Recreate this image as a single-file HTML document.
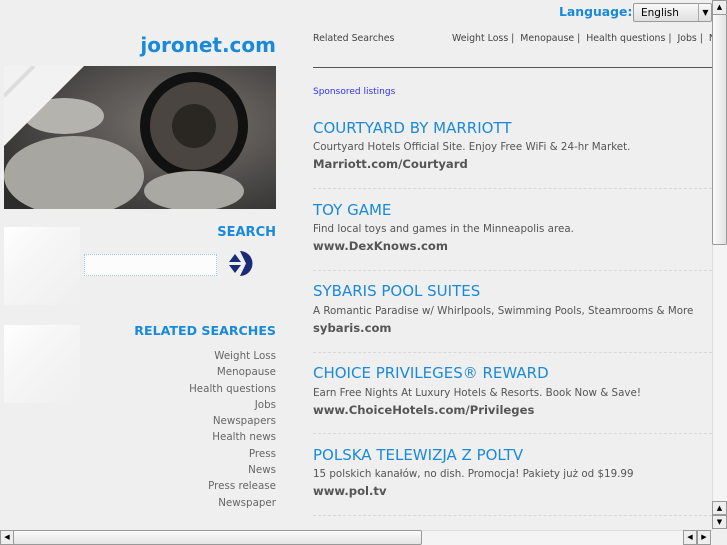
<!DOCTYPE html>
<html><head><meta charset="utf-8"><style>
*{margin:0;padding:0;box-sizing:border-box}
body{width:727px;height:545px;overflow:hidden;background:#efefef;font-family:"DejaVu Sans","Liberation Sans",sans-serif;position:relative}
.a{position:absolute;white-space:nowrap}
.r{text-align:right;right:451px}
.blue{color:#1a8ad8}
.rs{font-size:10.3px;color:#666;line-height:16.3px}
.lt{font-size:15px;color:#1a8ad8}
.ld{font-size:10.3px;color:#555}
.lu{font-size:11.6px;color:#555;font-weight:bold}
.sep{position:absolute;left:313px;width:399px;border-top:1px dashed #d8d8d8}
.deco{position:absolute;left:4px;width:76px;height:78px;background:linear-gradient(135deg,#fff 0,#f6f6f6 40%,#efefef 100%)}
</style></head><body>
<div class="a r blue" style="top:33px;font-size:20px;font-weight:bold">joronet.com</div>
<svg class="a" style="left:4px;top:66px" width="272" height="143">
<defs><radialGradient id="g" cx="0.65" cy="0.4" r="0.8"><stop offset="0" stop-color="#7a7570"/><stop offset="1" stop-color="#2c2c2c"/></radialGradient></defs>
<rect width="272" height="143" fill="url(#g)"/>
<ellipse cx="70" cy="110" rx="70" ry="40" fill="#a8a6a0"/>
<ellipse cx="60" cy="50" rx="40" ry="18" fill="#b5b3ad"/>
<circle cx="190" cy="60" r="54" fill="#111"/>
<circle cx="190" cy="60" r="44" fill="#4a4540"/>
<circle cx="190" cy="60" r="22" fill="#2a2622"/>
<ellipse cx="190" cy="125" rx="50" ry="20" fill="#aaa8a2"/>
<polygon points="0,0 80,0 0,80" fill="#f2f2f2"/>
<line x1="0" y1="30" x2="30" y2="0" stroke="#ddd" stroke-width="4"/>
</svg>
<div class="deco" style="top:227px"></div>
<div class="a r blue" style="top:225px;font-size:13px;font-weight:bold">SEARCH</div>
<div class="a" style="left:84px;top:254px;width:133px;height:22px;background:#fcfcfc;border:1px dotted #9cc8ee"></div>
<svg class="a" style="left:227px;top:250px" width="27" height="27"><path d="M13 1a12.5 12.5 0 1 1 0 25l6-12.5z" fill="#1a2a78"/><path d="M2 12L8 4L14 12z M2 15L8 23L14 15z" fill="#1a2a78"/></svg>
<div class="deco" style="top:325px"></div>
<div class="a r blue" style="top:323px;font-size:12.6px;font-weight:bold">RELATED SEARCHES</div>
<div class="a r rs" style="top:348px">Weight Loss<br>Menopause<br>Health questions<br>Jobs<br>Newspapers<br>Health news<br>Press<br>News<br>Press release<br>Newspaper</div>

<div class="a blue" style="left:559px;top:4px;font-size:12.4px;font-weight:bold">Language:</div>
<div class="a" style="left:633px;top:3px;width:79px;height:19px;border:1px solid #999;border-radius:2px;background:linear-gradient(#f8f8f8,#e0e0e0);font-size:10.5px;padding:3px 0 0 7px">English<span style="position:absolute;left:64px;top:0;height:17px;border-left:1px solid #aaa;width:14px;font-size:8px;text-align:center;line-height:17px">▼</span></div>
<div class="a" style="left:313px;top:33px;font-size:9.4px;color:#444">Related Searches</div>
<div class="a" style="left:452px;top:33px;font-size:9.4px;color:#444;width:260px;overflow:hidden">Weight Loss |&nbsp; Menopause |&nbsp; Health questions |&nbsp; Jobs |&nbsp; Newspapers</div>
<div class="a" style="left:313px;top:67px;width:399px;border-top:1px solid #555"></div>
<div class="a" style="left:313px;top:87px;font-size:9px;color:#3333ee">Sponsored listings</div>

<div class="a lt" style="top:119px;left:313px">COURTYARD BY MARRIOTT</div>
<div class="a ld" style="top:141px;left:313px">Courtyard Hotels Official Site. Enjoy Free WiFi &amp; 24-hr Market.</div>
<div class="a lu" style="top:157px;left:313px">Marriott.com/Courtyard</div>
<div class="sep" style="top:188px"></div>
<div class="a lt" style="top:201px;left:313px">TOY GAME</div>
<div class="a ld" style="top:223px;left:313px">Find local toys and games in the Minneapolis area.</div>
<div class="a lu" style="top:239px;left:313px">www.DexKnows.com</div>
<div class="sep" style="top:270px"></div>
<div class="a lt" style="top:282px;left:313px">SYBARIS POOL SUITES</div>
<div class="a ld" style="top:305px;left:313px">A Romantic Paradise w/ Whirlpools, Swimming Pools, Steamrooms &amp; More</div>
<div class="a lu" style="top:321px;left:313px">sybaris.com</div>
<div class="sep" style="top:352px"></div>
<div class="a lt" style="top:364px;left:313px">CHOICE PRIVILEGES® REWARD</div>
<div class="a ld" style="top:387px;left:313px">Earn Free Nights At Luxury Hotels &amp; Resorts. Book Now &amp; Save!</div>
<div class="a lu" style="top:403px;left:313px">www.ChoiceHotels.com/Privileges</div>
<div class="sep" style="top:433px"></div>
<div class="a lt" style="top:446px;left:313px">POLSKA TELEWIZJA Z POLTV</div>
<div class="a ld" style="top:468px;left:313px">15 polskich kanałów, no dish. Promocja! Pakiety już od $19.99</div>
<div class="a lu" style="top:484px;left:313px">www.pol.tv</div>
<div class="sep" style="top:515px"></div>

<div class="a" style="left:712px;top:0;width:15px;height:530px;background:#f4f4f4;border-left:1px solid #ddd"></div>
<div class="a" style="left:712px;top:0;width:15px;height:245px;background:linear-gradient(90deg,#fafafa,#e4e4e4);border:1px solid #999;border-radius:2px"></div>
<div class="a" style="left:712px;top:0;width:15px;height:15px;border:1px solid #999;background:#eee;font-size:7px;text-align:center;line-height:13px">▲</div>
<div class="a" style="left:712px;top:501px;width:15px;height:14px;border:1px solid #999;background:#eee;font-size:7px;text-align:center;line-height:12px">▲</div>
<div class="a" style="left:712px;top:515px;width:15px;height:14px;border:1px solid #999;background:#eee;font-size:7px;text-align:center;line-height:12px">▼</div>
<div class="a" style="left:0;top:530px;width:712px;height:15px;background:#f4f4f4;border-top:1px solid #ddd"></div>
<div class="a" style="left:0;top:530px;width:422px;height:15px;background:linear-gradient(#fafafa,#e4e4e4);border:1px solid #999;border-radius:2px"></div>
<div class="a" style="left:0;top:530px;width:14px;height:15px;border:1px solid #999;background:#eee;font-size:7px;text-align:center;line-height:13px">◀</div>
<div class="a" style="left:683px;top:530px;width:14px;height:15px;border:1px solid #999;background:#eee;font-size:7px;text-align:center;line-height:13px">◀</div>
<div class="a" style="left:697px;top:530px;width:14px;height:15px;border:1px solid #999;background:#eee;font-size:7px;text-align:center;line-height:13px">▶</div>
</body></html>
